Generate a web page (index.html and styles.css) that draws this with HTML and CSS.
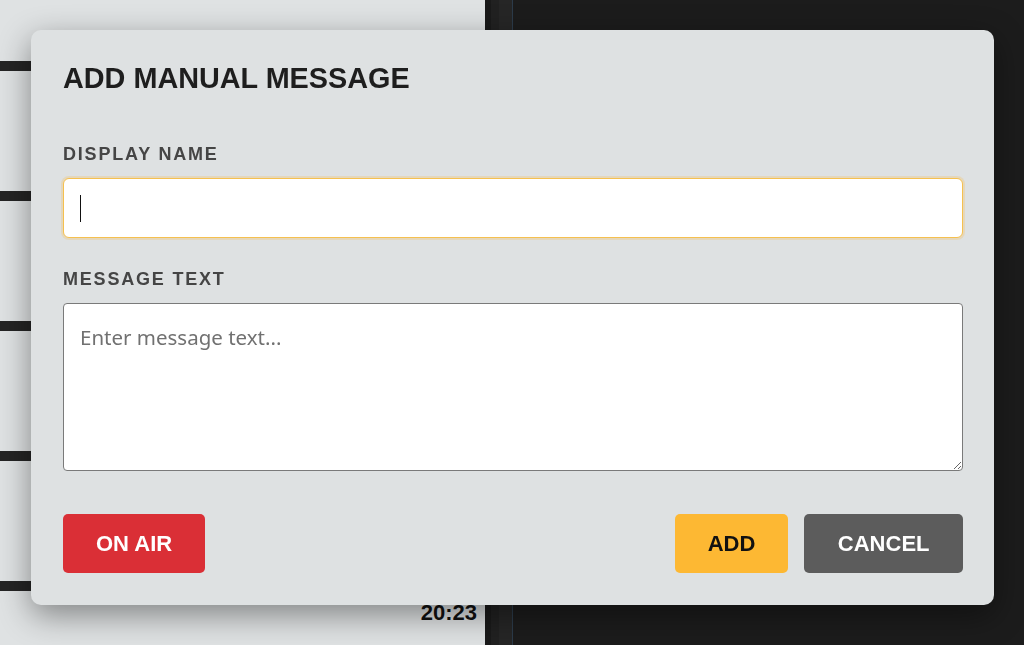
FILE: index.html
```html
<!DOCTYPE html>
<html lang="en">
<head>
<meta charset="utf-8">
<title>Add Manual Message</title>
<link rel="stylesheet" href="styles.css">
</head>
<body>
<div class="app">
  <div class="feed">
    <div class="card"><span class="time">20:11</span></div>
    <div class="card"><span class="time">20:14</span></div>
    <div class="card"><span class="time">20:17</span></div>
    <div class="card"><span class="time">20:20</span></div>
    <div class="card"><span class="time">20:23</span></div>
  </div>
  <div class="rail">
    <div class="rail-a"></div>
    <div class="rail-b"></div>
    <div class="rail-c"></div>
    <div class="rail-line"></div>
  </div>
  <div class="stage"></div>
</div>

<div class="overlay">
  <div class="modal">
    <h2 class="modal-title">ADD MANUAL MESSAGE</h2>
    <div class="field">
      <label class="field-label" for="name">DISPLAY NAME</label>
      <div class="input-wrap">
        <input id="name" class="text-input" type="text">
        <span class="caret"></span>
      </div>
    </div>
    <div class="field">
      <label class="field-label" for="msg">MESSAGE TEXT</label>
      <textarea id="msg" class="text-area" placeholder="Enter message text..."></textarea>
    </div>
    <div class="actions">
      <button class="btn btn-onair">ON AIR</button>
      <div class="actions-right">
        <button class="btn btn-add">ADD</button>
        <button class="btn btn-cancel">CANCEL</button>
      </div>
    </div>
  </div>
</div>
</body>
</html>
```

FILE: styles.css
```css
* { box-sizing: border-box; }

html, body {
  margin: 0;
  height: 100%;
  overflow: hidden;
}

body {
  font-family: "Liberation Sans", Arial, sans-serif;
  background: #1c1c1c;
}

.app {
  display: flex;
  height: 645px;
}

.feed {
  width: 485px;
  flex: none;
  background: #dfe2e3;
  padding-top: 61px;
  overflow: hidden;
}

.card {
  height: 130px;
  border-top: 10px solid #242424;
  display: flex;
  justify-content: flex-end;
  padding: 11px 8px 0 0;
}

.time {
  font-weight: 700;
  font-size: 22px;
  line-height: 1;
  color: #111;
}

.rail {
  display: flex;
  flex: none;
}
.rail-a { width: 6px; background: #1a1a1a; }
.rail-b { width: 8px; background: #212121; }
.rail-c { width: 13px; background: #262626; }
.rail-line { width: 1px; background: #2c3b4a; }

.stage {
  flex: 1;
  background: #1c1c1c;
}

.overlay {
  position: fixed;
  inset: 0;
  display: flex;
  justify-content: center;
  align-items: flex-start;
  padding-top: 30px;
}

.modal {
  width: 963px;
  margin-left: 1px;
  background: #dee1e2;
  border-radius: 10px;
  padding: 31px 31px 32px 32px;
  box-shadow: 0 10px 32px rgba(0, 0, 0, 0.42);
}

.modal-title {
  margin: 0 0 48px;
  font-size: 28.8px;
  line-height: 1.2;
  font-weight: 700;
  color: #1e1e1e;
}

.field {
  margin-bottom: 31px;
}
.field:last-of-type { margin-bottom: 0; }

.field-label {
  display: block;
  font-size: 18px;
  line-height: 1.2;
  font-weight: 700;
  letter-spacing: 1.8px;
  color: #454545;
  margin-bottom: 12.5px;
}

.input-wrap {
  position: relative;
}

.text-input {
  display: block;
  width: 100%;
  height: 60px;
  padding: 0 16px;
  font-family: "Noto Sans", sans-serif;
  font-size: 20px;
  color: #222;
  background: #fff;
  border: 1px solid #f5c04f;
  border-radius: 6px;
  outline: none;
  box-shadow: 0 0 0 2px rgba(253, 184, 51, 0.22);
}

.caret {
  position: absolute;
  left: 17px;
  top: 17px;
  width: 1px;
  height: 27px;
  background: #111;
}

.text-area {
  display: block;
  width: 100%;
  height: 168px;
  padding: 19px 16px 16px;
  font-family: "Noto Sans", sans-serif;
  font-size: 20.5px;
  color: #222;
  background: #fff;
  border: 1px solid #7a7a7a;
  border-radius: 4px;
  outline: none;
  resize: vertical;
}
.text-area::placeholder {
  color: #717171;
}

.actions {
  margin-top: 43px;
  display: flex;
  justify-content: space-between;
  align-items: center;
}

.actions-right {
  display: flex;
  gap: 16px;
}

.btn {
  font-family: "Liberation Sans", Arial, sans-serif;
  font-weight: 700;
  font-size: 22px;
  line-height: 25px;
  padding: 17px 33px;
  border: none;
  border-radius: 5px;
  cursor: pointer;
}

.btn-onair { background: #da2f36; color: #fff; }
.btn-add { background: #fdb833; color: #111; }
.btn-cancel { background: #5c5c5c; color: #fff; padding: 17px 33.5px; }
```
